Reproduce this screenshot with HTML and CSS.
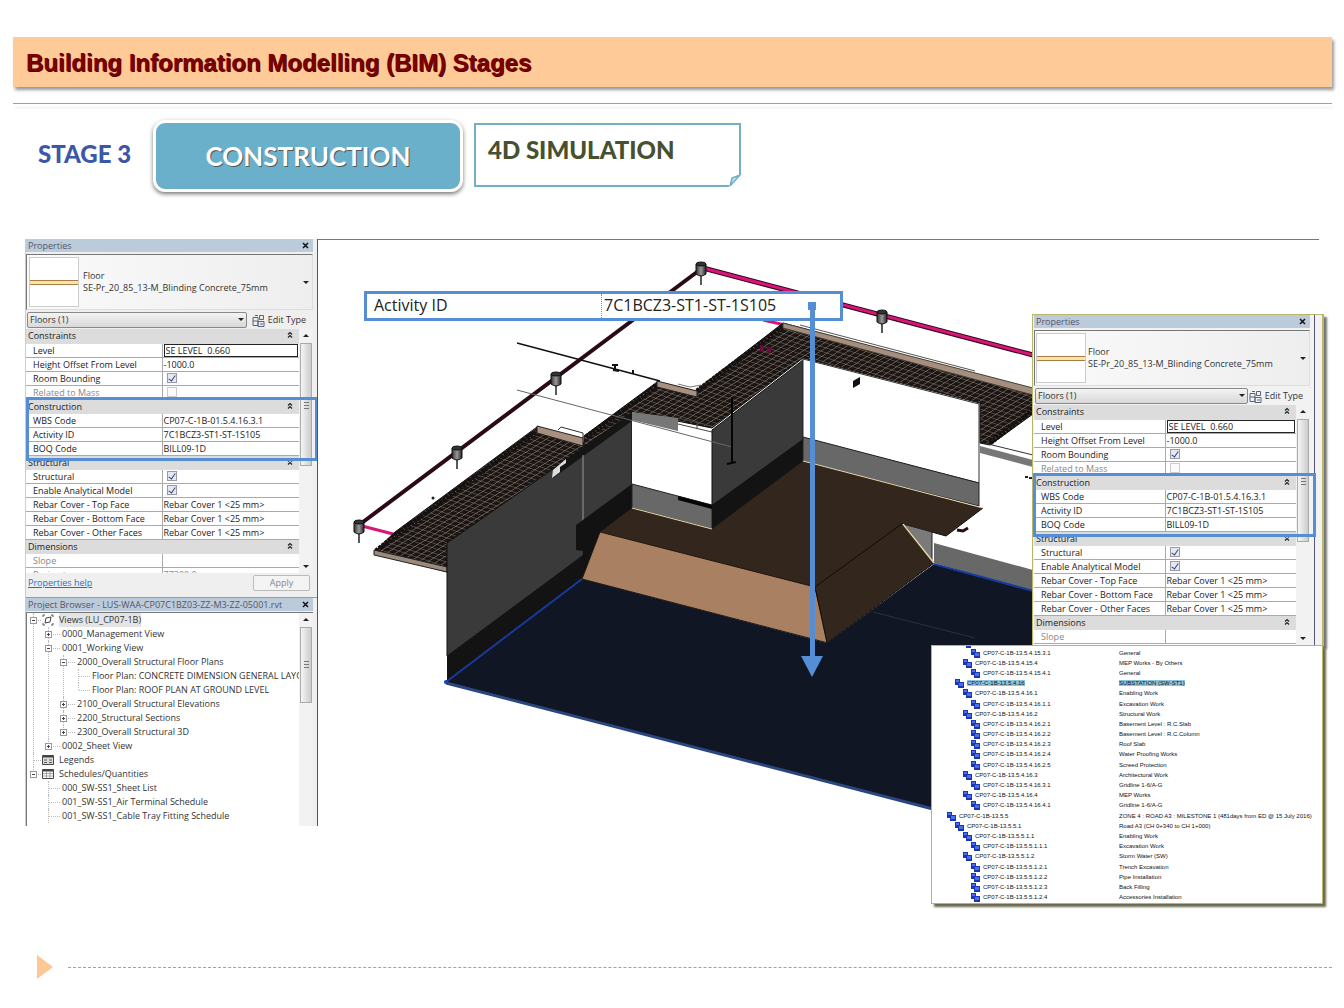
FILE: index.html
```html
<!DOCTYPE html>
<html lang="en">
<head>
<meta charset="utf-8">
<title>Building Information Modelling (BIM) Stages</title>
<link rel="stylesheet" href="styles.css">
</head>
<body>
<svg class="defs" width="0" height="0" aria-hidden="true">
  <defs>
    <symbol id="edit-type" viewBox="0 0 13 13">
      <path d="M1 3.500h5v8H1zM7.500 1.500h4v4h-4zM6 7.500h6v5H6zM1 7h5M8 10h3M3 1.500h3" fill="none" stroke="#56657c"/>
    </symbol>
    <symbol id="chevrons" viewBox="0 0 6 8">
      <path d="M1 3.500L3 1.500L5 3.500M1 6.500L3 4.500L5 6.500" fill="none" stroke="#222" stroke-width="1.200"/>
    </symbol>
    <symbol id="close" viewBox="0 0 7 7">
      <path d="M1 1L6 6M6 1L1 6" stroke="#111" stroke-width="1.500"/>
    </symbol>
    <symbol id="node" viewBox="0 0 9 9">
      <path d="M0 0h5v3h4v6H3V6H0z" fill="#1a35b8"/>
      <path d="M1 1h3v2H1zM4 4h4v3H4z" fill="#4a70e8"/>
    </symbol>
  </defs>
</svg>

<header class="banner"><h1>Building Information Modelling (BIM) Stages</h1></header>
<hr class="rule">

<section class="stages">
  <p class="stage-no">STAGE 3</p>
  <p class="stage-name">CONSTRUCTION</p>
  <div class="note">
    <h2>4D SIMULATION</h2>
    <svg class="fold" viewBox="0 0 12 12" width="12" height="12"><path d="M0 0H12V12H0z" fill="#fff"/><path d="M11 0L1 11L3 3L11 0z" fill="#c5e3ed" stroke="#6aafc8" stroke-width="1.500"/></svg>
  </div>
</section>

<main class="workspace">
  <div class="dock">
    <section class="props">
      <header class="bar"><span>Properties</span><button class="close" aria-label="Close properties"><svg width="7" height="7"><use href="#close"/></svg></button></header>
      <div class="type">
        <span class="thumb"></span>
        <span class="type-name">Floor<br>SE-Pr_20_85_13-M_Blinding Concrete_75mm</span>
        <span class="down"></span>
      </div>
      <div class="filter">
        <span class="combo"><select aria-label="Filter"><option>Floors (1)</option></select></span>
        <button class="edit"><svg width="13" height="13"><use href="#edit-type"/></svg>Edit Type</button>
      </div>
      <div class="grid">
        <table class="params">
          <tr class="group"><th colspan="2">Constraints<svg width="6" height="8"><use href="#chevrons"/></svg></th></tr>
          <tr><th><label for="a1">Level</label></th><td><input class="value" id="a1" type="text" value="SE LEVEL  0.660"></td></tr>
          <tr><th>Height Offset From Level</th><td>-1000.0</td></tr>
          <tr><th><label for="a2">Room Bounding</label></th><td><input id="a2" type="checkbox" checked></td></tr>
          <tr class="off"><th><label for="a3">Related to Mass</label></th><td><input id="a3" type="checkbox" disabled></td></tr>
          <tr class="group"><th colspan="2">Construction<svg width="6" height="8"><use href="#chevrons"/></svg></th></tr>
          <tr><th>WBS Code</th><td>CP07-C-1B-01.5.4.16.3.1</td></tr>
          <tr><th>Activity ID</th><td>7C1BCZ3-ST1-ST-1S105</td></tr>
          <tr><th>BOQ Code</th><td>BILL09-1D</td></tr>
          <tr class="group"><th colspan="2">Structural<svg width="6" height="8"><use href="#chevrons"/></svg></th></tr>
          <tr><th><label for="a4">Structural</label></th><td><input id="a4" type="checkbox" checked></td></tr>
          <tr><th><label for="a5">Enable Analytical Model</label></th><td><input id="a5" type="checkbox" checked></td></tr>
          <tr><th>Rebar Cover - Top Face</th><td>Rebar Cover 1 &lt;25 mm&gt;</td></tr>
          <tr><th>Rebar Cover - Bottom Face</th><td>Rebar Cover 1 &lt;25 mm&gt;</td></tr>
          <tr><th>Rebar Cover - Other Faces</th><td>Rebar Cover 1 &lt;25 mm&gt;</td></tr>
          <tr class="group"><th colspan="2">Dimensions<svg width="6" height="8"><use href="#chevrons"/></svg></th></tr>
          <tr class="off"><th>Slope</th><td></td></tr>
          <tr class="off"><th>Perimeter</th><td>77300.0</td></tr>
        </table>
        <div class="scroll"><i class="up"></i><i class="grip"></i><i class="down"></i></div>
      </div>
      <footer class="help"><a href="#help">Properties help</a><button disabled>Apply</button></footer>
      <div class="frame"></div>
    </section>

    <section class="browser">
      <header class="bar"><span>Project Browser - LUS-WAA-CP07C1BZ03-ZZ-M3-ZZ-05001.rvt</span><button class="close" aria-label="Close browser"><svg width="7" height="7"><use href="#close"/></svg></button></header>
      <div class="tree-box">
        <ul class="tree">
          <li><div class="row"><button class="tog minus" aria-label="Collapse"></button><svg class="ico" width="12" height="12" viewBox="0 0 12 12"><path d="M1 3V1h2M9 1h2v2M11 9v2H9M3 11H1V9" fill="none" stroke="#555"/><path d="M4 4l5-1-1 5-5 1z" fill="none" stroke="#444"/></svg><span class="sel">Views (LU_CP07-1B)</span></div>
            <ul>
              <li><div class="row"><button class="tog" aria-label="Expand"></button>0000_Management View</div></li>
              <li><div class="row"><button class="tog minus" aria-label="Collapse"></button>0001_Working View</div>
                <ul>
                  <li><div class="row"><button class="tog minus" aria-label="Collapse"></button>2000_Overall Structural Floor Plans</div>
                    <ul>
                      <li><div class="row leaf">Floor Plan: CONCRETE DIMENSION GENERAL LAYC</div></li>
                      <li><div class="row leaf">Floor Plan: ROOF PLAN AT GROUND LEVEL</div></li>
                    </ul>
                  </li>
                  <li><div class="row"><button class="tog" aria-label="Expand"></button>2100_Overall Structural Elevations</div></li>
                  <li><div class="row"><button class="tog" aria-label="Expand"></button>2200_Structural Sections</div></li>
                  <li><div class="row"><button class="tog" aria-label="Expand"></button>2300_Overall Structural 3D</div></li>
                </ul>
              </li>
              <li><div class="row"><button class="tog" aria-label="Expand"></button>0002_Sheet View</div></li>
            </ul>
          </li>
          <li><div class="row leaf"><svg class="ico" width="12" height="12" viewBox="0 0 12 12"><path d="M.5 1.500h11v9H.5z" fill="#ddd" stroke="#444"/><path d="M1 2.500h10" stroke="#444" stroke-width="2"/><path d="M2 6h3M7 6h3M2 8.500h3M7 8.500h3" stroke="#555"/></svg>Legends</div></li>
          <li><div class="row"><button class="tog minus" aria-label="Collapse"></button><svg class="ico" width="12" height="12" viewBox="0 0 12 12"><path d="M.5 1.500h11v9H.5z" fill="#fff" stroke="#444"/><path d="M1 2.500h10" stroke="#444" stroke-width="2"/><path d="M1 5.500h10M1 8h10M4.500 3v7M8 3v7" stroke="#888" stroke-width=".7"/></svg>Schedules/Quantities</div>
            <ul>
              <li><div class="row leaf">000_SW-SS1_Sheet List</div></li>
              <li><div class="row leaf">001_SW-SS1_Air Terminal Schedule</div></li>
              <li class="more"><div class="row leaf">001_SW-SS1_Cable Tray Fitting Schedule</div></li>
            </ul>
          </li>
        </ul>
        <div class="scroll"><i class="up"></i><i class="grip"></i></div>
      </div>
    </section>
  </div>

  <div class="view">
    <svg class="model" viewBox="318 240 1001 586" role="img" aria-label="3D model of the substation">
      <defs>
        <pattern id="mesh" width="10" height="10" patternUnits="userSpaceOnUse" patternTransform="matrix(.6 .2 .5 -.32 0 0)">
          <rect width="10" height="10" fill="#1b1614"/><path d="M0 0H10M0 0V10" stroke="#94867a" stroke-width="2"/>
        </pattern>
        <linearGradient id="can"><stop offset="0" stop-color="#333"/><stop offset=".5" stop-color="#999"/><stop offset="1" stop-color="#222"/></linearGradient>
        <g id="sensor"><path d="M0 6V16" stroke="#222" stroke-width="1.500"/><path d="M-5-5V5Q0 9 5 5V-5z" fill="url(#can)" stroke="#111"/><ellipse cy="-5" rx="5" ry="2" fill="#333" stroke="#111"/></g>
      </defs>
      <path d="M359 525L701 269" stroke="#2a0a16" stroke-width="4"/>
      <path d="M703 268L1033 355" stroke="#35051c" stroke-width="5"/>
      <path d="M703 268L1033 355M362 526L397 535M763 320L785 325" stroke="#d8167a" stroke-width="3"/>
      <!-- roofs -->
      <path d="M537 427L585 443L585 452L447 545V572L374 552L395 532z" fill="url(#mesh)" stroke="#111"/>
      <path d="M376 551L396 535L540 429" fill="none" stroke="#151110" stroke-width="5" stroke-dasharray="3 1"/>
      <path d="M374 550L447 567V572L374 555z" fill="#9a8a7c" stroke="#222"/>
      <path d="M537 426L583 438V446L537 433z" fill="#a98f80" stroke="#222"/>
      <path d="M558 430L561 427L583 433V438" fill="none" stroke="#333"/>
      <path d="M657 382L695 391L783 323L1033 390V414L990 445L980 443V403L803 358L712 428L632 412L584 450V436z" fill="url(#mesh)" stroke="#111"/>
      <path d="M586 437L658 385M697 391L784 326M990 443L1033 410" stroke="#151110" stroke-width="5" stroke-dasharray="3 1"/>
      <path d="M657 381L697 391V397L657 387z" fill="#a98f80" stroke="#222"/>
      <path d="M678 384L690 387L701 385" fill="none" stroke="#777"/>
      <path d="M783 323L1033 388V395L783 328z" fill="#a58e80" stroke="#443"/>
      <path d="M800 325L975 371" stroke="#555"/>
      <path d="M760 345l4 1v6l-4-1zM767 347l4 1v5l-4-1z" fill="#700a40"/>
      <!-- left wall -->
      <path d="M447 543L632 414V486L583 556L447 656z" fill="#3a3a3a" stroke="#111"/>
      <path d="M583 447L632 412V421L553 478V470z" fill="#151515"/>
      <path d="M553 470L566 459V463L560 467V472L552 478z" fill="#ddd"/>
      <path d="M583 455V524" stroke="#999"/>
      <path d="M447 656L583 555V579L447 681z" fill="#131313"/>
      <path d="M576 525L632 484V509L600 533L582 580L583 551L576 550z" fill="#121212"/>
      <!-- window opening -->
      <path d="M632 412L712 432V506L632 486z" fill="#fff"/>
      <path d="M632 412L678 418V431L632 420z" fill="#777"/>
      <path d="M678 424L712 432M678 418L712 426M697 422V429" fill="none" stroke="#444"/>
      <path d="M632 484L712 505V529L632 508z" fill="#686868" stroke="#222"/>
      <path d="M678 496L712 505V509L678 500z" fill="#050505"/>
      <path d="M712 430L803 360V440L712 506z" fill="#3a3a3a" stroke="#111"/>
      <path d="M712 505L803 439V463L712 530z" fill="#131313"/>
      <!-- right wall -->
      <path d="M803 359L979 404V483L803 438z" fill="#fff" stroke="#333"/>
      <path d="M803 437L979 483V506L803 462z" fill="#686868" stroke="#222"/>
      <path d="M853 381L860 377V384L853 388z" fill="#111"/>
      <path d="M980 446L1033 460V467L980 453z" fill="#777"/>
      <path d="M988 444L1033 455" stroke="#333"/>
      <path d="M1025 476h3v2h-3zM1029 477h3v2h-3z" fill="#222"/>
      <!-- excavation -->
      <path d="M632 508L712 529L803 461L983 508L946 536L903 524L820 600L600 532z" fill="#33261d"/>
      <path d="M983 508L946 536L903 524" fill="none" stroke="#111"/>
      <path d="M632 508L712 529M803 461L983 508" stroke="#e6d9a8"/>
      <path d="M903 524L932 532V562z" fill="#7a7a7a" stroke="#222"/>
      <path d="M934 543L1033 570V591L934 563z" fill="#686868"/>
      <path d="M600 532L815 587L828 643L582 579z" fill="#a98061" stroke="#22180f"/>
      <path d="M903 523L934 563L827 643L815 587z" fill="#33261d" stroke="#110c08"/>
      <path d="M903 524L934 563" stroke="#e6d9a8" stroke-width="1.500"/>
      <path d="M957 530L963 531L968 528" fill="none" stroke="#2a0a16" stroke-width="3"/>
      <path d="M446 682L582 579L827 643L934 564L1033 591V835z" fill="#101624"/>
      <path d="M873 612L975 638" stroke="#2a3040"/>
      <path d="M446 682L582 579M934 564L1033 591" stroke="#173a9c" stroke-width="2"/>
      <path d="M446 683L933 809" stroke="#2a4680" stroke-width="3"/>
      <circle cx="446" cy="682" r="2" fill="#1c3fb0"/>
      <!-- services -->
      <path d="M517 343L660 381" stroke="#111" stroke-width="1.500"/>
      <path d="M612 365h6M615 365v5M613 370l6 1M633 370v4" stroke="#111" stroke-width="2"/>
      <path d="M517 390L732 447" stroke="#666"/>
      <path d="M732 398V463M727 464L736 462" stroke="#050505" stroke-width="2"/>
      <circle cx="433" cy="498" r="1.500" fill="#222"/>
      <use href="#sensor" x="359" y="527"/><use href="#sensor" x="457" y="453"/><use href="#sensor" x="556" y="379"/><use href="#sensor" x="701" y="269"/><use href="#sensor" x="882" y="317"/>
    </svg>

    <dl class="callout"><dt>Activity ID</dt><dd>7C1BCZ3-ST1-ST-1S105</dd></dl>
    <svg class="arrow" width="22" height="375" viewBox="0 0 22 375"><path d="M7 0h8v8h-1V354h8L11 375L0 354H9V8H7z" fill="#558ed5"/></svg>

    <section class="props inset">
      <header class="bar"><span>Properties</span><button class="close" aria-label="Close properties"><svg width="7" height="7"><use href="#close"/></svg></button></header>
      <div class="type">
        <span class="thumb"></span>
        <span class="type-name">Floor<br>SE-Pr_20_85_13-M_Blinding Concrete_75mm</span>
        <span class="down"></span>
      </div>
      <div class="filter">
        <span class="combo"><select aria-label="Filter"><option>Floors (1)</option></select></span>
        <button class="edit"><svg width="13" height="13"><use href="#edit-type"/></svg>Edit Type</button>
      </div>
      <div class="grid">
        <table class="params">
          <tr class="group"><th colspan="2">Constraints<svg width="6" height="8"><use href="#chevrons"/></svg></th></tr>
          <tr><th><label for="b1">Level</label></th><td><input class="value" id="b1" type="text" value="SE LEVEL  0.660"></td></tr>
          <tr><th>Height Offset From Level</th><td>-1000.0</td></tr>
          <tr><th><label for="b2">Room Bounding</label></th><td><input id="b2" type="checkbox" checked></td></tr>
          <tr class="off"><th><label for="b3">Related to Mass</label></th><td><input id="b3" type="checkbox" disabled></td></tr>
          <tr class="group"><th colspan="2">Construction<svg width="6" height="8"><use href="#chevrons"/></svg></th></tr>
          <tr><th>WBS Code</th><td>CP07-C-1B-01.5.4.16.3.1</td></tr>
          <tr><th>Activity ID</th><td>7C1BCZ3-ST1-ST-1S105</td></tr>
          <tr><th>BOQ Code</th><td>BILL09-1D</td></tr>
          <tr class="group"><th colspan="2">Structural<svg width="6" height="8"><use href="#chevrons"/></svg></th></tr>
          <tr><th><label for="b4">Structural</label></th><td><input id="b4" type="checkbox" checked></td></tr>
          <tr><th><label for="b5">Enable Analytical Model</label></th><td><input id="b5" type="checkbox" checked></td></tr>
          <tr><th>Rebar Cover - Top Face</th><td>Rebar Cover 1 &lt;25 mm&gt;</td></tr>
          <tr><th>Rebar Cover - Bottom Face</th><td>Rebar Cover 1 &lt;25 mm&gt;</td></tr>
          <tr><th>Rebar Cover - Other Faces</th><td>Rebar Cover 1 &lt;25 mm&gt;</td></tr>
          <tr class="group"><th colspan="2">Dimensions<svg width="6" height="8"><use href="#chevrons"/></svg></th></tr>
          <tr class="off"><th>Slope</th><td></td></tr>
        </table>
        <div class="scroll"><i class="up"></i><i class="grip"></i><i class="down"></i></div>
      </div>
      <div class="frame"></div>
    </section>

    <section class="wbs">
      <table>
        <tr><td class="d4"><svg width="9" height="9"><use href="#node"/></svg>CP07-C-1B-13.5.4.15.3.1</td><td>General</td></tr>
        <tr><td class="d3"><svg width="9" height="9"><use href="#node"/></svg>CP07-C-1B-13.5.4.15.4</td><td>MEP Works - By Others</td></tr>
        <tr><td class="d4"><svg width="9" height="9"><use href="#node"/></svg>CP07-C-1B-13.5.4.15.4.1</td><td>General</td></tr>
        <tr><td class="d2"><svg width="9" height="9"><use href="#node"/></svg><mark>CP07-C-1B-13.5.4.16</mark></td><td><mark>SUBSTATION (SW-ST1)</mark></td></tr>
        <tr><td class="d3"><svg width="9" height="9"><use href="#node"/></svg>CP07-C-1B-13.5.4.16.1</td><td>Enabling Work</td></tr>
        <tr><td class="d4"><svg width="9" height="9"><use href="#node"/></svg>CP07-C-1B-13.5.4.16.1.1</td><td>Excavation Work</td></tr>
        <tr><td class="d3"><svg width="9" height="9"><use href="#node"/></svg>CP07-C-1B-13.5.4.16.2</td><td>Structural Work</td></tr>
        <tr><td class="d4"><svg width="9" height="9"><use href="#node"/></svg>CP07-C-1B-13.5.4.16.2.1</td><td>Basement Level : R.C.Slab</td></tr>
        <tr><td class="d4"><svg width="9" height="9"><use href="#node"/></svg>CP07-C-1B-13.5.4.16.2.2</td><td>Basement Level : R.C.Column</td></tr>
        <tr><td class="d4"><svg width="9" height="9"><use href="#node"/></svg>CP07-C-1B-13.5.4.16.2.3</td><td>Roof Slab</td></tr>
        <tr><td class="d4"><svg width="9" height="9"><use href="#node"/></svg>CP07-C-1B-13.5.4.16.2.4</td><td>Water Proofing Works</td></tr>
        <tr><td class="d4"><svg width="9" height="9"><use href="#node"/></svg>CP07-C-1B-13.5.4.16.2.5</td><td>Screed Protection</td></tr>
        <tr><td class="d3"><svg width="9" height="9"><use href="#node"/></svg>CP07-C-1B-13.5.4.16.3</td><td>Architectural Work</td></tr>
        <tr><td class="d4"><svg width="9" height="9"><use href="#node"/></svg>CP07-C-1B-13.5.4.16.3.1</td><td>Gridline 1-6/A-G</td></tr>
        <tr><td class="d3"><svg width="9" height="9"><use href="#node"/></svg>CP07-C-1B-13.5.4.16.4</td><td>MEP Works</td></tr>
        <tr><td class="d4"><svg width="9" height="9"><use href="#node"/></svg>CP07-C-1B-13.5.4.16.4.1</td><td>Gridline 1-6/A-G</td></tr>
        <tr><td class="d1"><svg width="9" height="9"><use href="#node"/></svg>CP07-C-1B-13.5.5</td><td>ZONE 4 : ROAD A3 : MILESTONE 1 (481days from ED @ 15 July 2016)</td></tr>
        <tr><td class="d2"><svg width="9" height="9"><use href="#node"/></svg>CP07-C-1B-13.5.5.1</td><td>Road A3 (CH 0+340 to CH 1+000)</td></tr>
        <tr><td class="d3"><svg width="9" height="9"><use href="#node"/></svg>CP07-C-1B-13.5.5.1.1</td><td>Enabling Work</td></tr>
        <tr><td class="d4"><svg width="9" height="9"><use href="#node"/></svg>CP07-C-1B-13.5.5.1.1.1</td><td>Excavation Work</td></tr>
        <tr><td class="d3"><svg width="9" height="9"><use href="#node"/></svg>CP07-C-1B-13.5.5.1.2</td><td>Storm Water (SW)</td></tr>
        <tr><td class="d4"><svg width="9" height="9"><use href="#node"/></svg>CP07-C-1B-13.5.5.1.2.1</td><td>Trench Excavation</td></tr>
        <tr><td class="d4"><svg width="9" height="9"><use href="#node"/></svg>CP07-C-1B-13.5.5.1.2.2</td><td>Pipe Installation</td></tr>
        <tr><td class="d4"><svg width="9" height="9"><use href="#node"/></svg>CP07-C-1B-13.5.5.1.2.3</td><td>Back Filling</td></tr>
        <tr><td class="d4"><svg width="9" height="9"><use href="#node"/></svg>CP07-C-1B-13.5.5.1.2.4</td><td>Accessories Installation</td></tr>
      </table>
    </section>
  </div>
</main>

<footer class="foot"><span class="play"></span><span class="dash"></span></footer>
</body>
</html>
```

FILE: styles.css
```css
* { box-sizing: border-box; }
body { margin: 0; background: #fff; color: #333; font: 9px/14px "Open Sans", "Noto Sans", sans-serif; }
h1, h2, p, dl, dd, ul { margin: 0; padding: 0; font-weight: normal; }
button, input, select { font: inherit; color: inherit; margin: 0; padding: 0; border: 0; background: none; }
.defs { position: absolute; }

.banner { margin: 37px 12px 0 13px; padding: 1px 13px 0; background: #fdca98; box-shadow: 2px 3px 3px #999; }
.banner h1 { font: bold 24px/49px "Liberation Sans", Arial, sans-serif; color: #7b0000; text-shadow: 1px 1px 0 #5a0000; }
.rule { margin: 16px 12px 0 13px; border: 0; height: 1px; background: #f0902a; box-shadow: 2px 4px 3px #dde5e2; }

.stages { display: flex; align-items: flex-start; margin: 16px 0 0 38px; font-family: Lato, sans-serif; }
.stage-no { width: 115px; padding-top: 20px; font-size: 24px; line-height: 28px; font-weight: 900; color: #3c57a8; }
.stage-name { width: 310px; margin-right: 11px; border: 3px solid #fff; border-radius: 12px; background: #6ab0ca; box-shadow: 0 2px 4px #777; color: #fff; font-size: 26px; font-weight: 700; line-height: 66px; text-align: center; text-shadow: 1px 1px 0 #555; }
.note { position: relative; width: 267px; height: 64px; margin-top: 3px; border: 2px solid #74aec0; padding: 11px 12px; }
.note h2 { font-size: 24px; line-height: 28px; font-weight: 900; color: #47502f; }
.fold { position: absolute; right: -2px; bottom: -2px; }

.workspace { display: grid; grid-template-columns: 292px 1fr; margin: 47px 25px 0 25px; }
.dock { background: #efefef; border-left: 1px solid #ccc; }
.view { position: relative; border-top: 1px solid #777; border-left: 1px solid #555; }
.model { display: block; width: 100%; }

.bar { display: flex; justify-content: space-between; align-items: center; height: 13px; padding: 0 4px 0 2px; background: #bccbda; color: #556; line-height: 13px; }
.close { display: flex; }
.props { position: relative; padding-right: 4px; }
.dock .props { height: 358px; }
.type { position: relative; display: flex; align-items: center; height: 56px; margin-top: 2px; padding: 0 3px 0 2px; border: 1px solid #777; border-color: #777 #ddd #ddd #777; background: linear-gradient(90deg, #fafafa, #eee); }
.thumb { width: 50px; height: 50px; border: 1px solid #ccc; background: linear-gradient(#fff 22px, #a87d45 22px, #a87d45 23px, #fbe3a5 23px, #fbe3a5 26px, #a87d45 26px, #a87d45 27px, #fff 27px); }
.type-name { flex: 1; padding-left: 4px; line-height: 12px; white-space: nowrap; }
i { display: block; }
.down, .up { width: 0; height: 0; border: 3px solid transparent; border-top-color: #222; border-bottom: 0; }
.up { border: 3px solid transparent; border-bottom-color: #222; border-top: 0; }
.filter { display: flex; justify-content: space-between; align-items: center; height: 19px; padding: 1px 7px 0 1px; }
.combo { position: relative; width: 220px; }
.combo::after { content: ""; position: absolute; right: 3px; top: 6px; border: 3px solid transparent; border-top-color: #222; border-bottom: 0; }
.combo select { display: block; width: 100%; height: 16px; padding-left: 2px; appearance: none; border: 1px solid #888; border-radius: 2px; background: linear-gradient(#f4f4f4, #d8d8d8); }
.edit { display: flex; align-items: center; gap: 3px; }
.grid { display: flex; height: 244px; overflow: hidden; background: #fff; color: #222; }
.params { flex: 1; height: 252px; border-collapse: collapse; table-layout: fixed; }
.params tr { height: 14px; }
.params th, .params td { height: 14px; padding: 0 1px; border-bottom: 1px solid #aaa; text-align: left; font-weight: normal; line-height: 13px; white-space: nowrap; }
.params th { width: 136px; padding-left: 7px; border-right: 1px solid #aaa; }
.params .group th { padding: 0 5px 0 2px; background: #dcdcdc; border-color: #ddd; }
.group svg { float: right; margin-top: 2px; }
.off { color: #888; }
.value { display: block; width: 100%; height: 13px; padding: 0 1px; border: 1px solid #222; white-space: pre; }
input[type=checkbox] { position: relative; display: block; width: 10px; height: 10px; margin-left: 3px; appearance: none; border: 1px solid #99a; background: #e4e8f2; }
input[type=checkbox]:disabled { border-color: #ccc; background: #fafafa; }
input:checked::after { content: ""; position: absolute; left: 2px; top: 0; width: 3px; height: 6px; border: solid #34406e; border-width: 0 1px 1px 0; transform: rotate(35deg); }
.scroll { display: flex; flex-direction: column; align-items: center; width: 14px; padding: 5px 0; background: #f2f2f2; }
.grip { width: 12px; height: 123px; margin-top: 6px; border: 1px solid #aaa; background: linear-gradient(#777, #777) center 58px / 5px 1px no-repeat, linear-gradient(#777, #777) center 61px / 5px 1px no-repeat, linear-gradient(#777, #777) center 64px / 5px 1px no-repeat, linear-gradient(90deg, #f5f5f5, #ccc); }
.scroll .down { margin-top: auto; }
.help { display: flex; justify-content: space-between; align-items: center; padding: 2px 3px 0 2px; }
.help a { color: #1c6fc8; }
.help button { width: 57px; height: 16px; border: 1px solid #bbb; border-radius: 2px; background: #f4f4f4; color: #888; }
.frame { position: absolute; left: 0; right: -1px; top: 158px; height: 64px; border: 3px solid #558ed5; }

.browser { border-top: 1px solid #99a; padding-right: 4px; }
.tree-box { display: flex; height: 214px; margin-top: 1px; border-top: 1px solid #777; border-left: 1px solid #777; background: #fff; overflow: hidden; }
.tree { flex: 1; min-width: 0; overflow: hidden; padding-left: 3px; }
.tree ul { margin-left: 15px; }
.tree li { position: relative; list-style: none; }
.tree li::before { content: ""; position: absolute; left: 3px; top: 0; bottom: 0; border-left: 1px dotted #bbb; }
.tree li:last-child::before { bottom: auto; height: 7px; }
.tree li.more:last-child::before { height: 14px; }
.row { position: relative; display: flex; align-items: center; height: 14px; white-space: nowrap; }
.row::before { content: ""; position: absolute; left: 4px; width: 11px; top: 7px; border-top: 1px dotted #bbb; }
.tog { position: relative; flex: none; width: 7px; height: 7px; margin-right: 10px; border: 1px solid #999; background: linear-gradient(#444, #444) center / 3px 1px no-repeat, linear-gradient(#444, #444) center / 1px 3px no-repeat, #fff; }
.tog.minus { background: linear-gradient(#444, #444) center / 3px 1px no-repeat, #fff; }
.ico { position: relative; flex: none; margin: 0 5px 0 -5px; background: #fff; }
.leaf { padding-left: 17px; }
.sel { background: #e4e4e4; }
.tree-box .grip { height: 76px; background: linear-gradient(#777, #777) center 33px / 5px 1px no-repeat, linear-gradient(#777, #777) center 36px / 5px 1px no-repeat, linear-gradient(#777, #777) center 39px / 5px 1px no-repeat, linear-gradient(90deg, #f5f5f5, #ccc); }

.callout { position: absolute; left: 46px; top: 51px; display: flex; width: 479px; height: 30px; border: 3px solid #558ed5; background: #fff; color: #222; font-size: 16px; line-height: 23px; }
.callout dt { width: 235px; padding-left: 7px; border-right: 1px dotted #888; }
.callout dd { padding-left: 2px; }
.arrow { position: absolute; left: 483px; top: 62px; }

.inset { position: absolute; left: 714px; top: 74px; width: 292px; height: 332px; padding: 0 12px 0 1px; border: 1px solid #b9b56a; border-right-width: 2px; background: linear-gradient(#557, #557) 281px 0 / 1px 100% no-repeat, #f2f2f2; box-shadow: 3px 3px 2px #777; }
.inset .type { padding-left: 1px; }
.inset .type-name { padding-left: 2px; }
.inset .params th { width: 131px; }
.inset .params { height: 238px; }
.inset .grid { height: 240px; }
.inset .combo { width: 213px; }
.inset .frame { right: 6px; }
.wbs { position: absolute; left: 613px; top: 405px; width: 392px; height: 259px; padding-top: 2px; border: 1px solid #b9b56a; background: #fff; box-shadow: 3px 3px 2px #6b6850; overflow: hidden; }
.wbs::before { content: ""; position: absolute; left: 34px; top: 0; width: 5px; height: 2px; background: #1a35b8; }
.wbs table { height: 255px; border-collapse: collapse; color: #111; font: 6px/9px "Liberation Sans", sans-serif; }
.wbs td { padding: 0; white-space: nowrap; }
.wbs td:first-child { min-width: 187px; }
.wbs td svg { float: left; margin-right: 3px; }
.wbs .d1 { padding-left: 15px; }
.wbs .d2 { padding-left: 23px; }
.wbs .d3 { padding-left: 31px; }
.wbs .d4 { padding-left: 39px; }
mark { background: #8fc3dd; color: #111; }

.foot { display: flex; align-items: center; gap: 15px; margin: 129px 12px 27px 37px; }
.play { border: solid transparent; border-width: 12px 0 12px 16px; border-left-color: #fdc896; }
.dash { flex: 1; border-top: 1px dashed #e0982f; }
```
